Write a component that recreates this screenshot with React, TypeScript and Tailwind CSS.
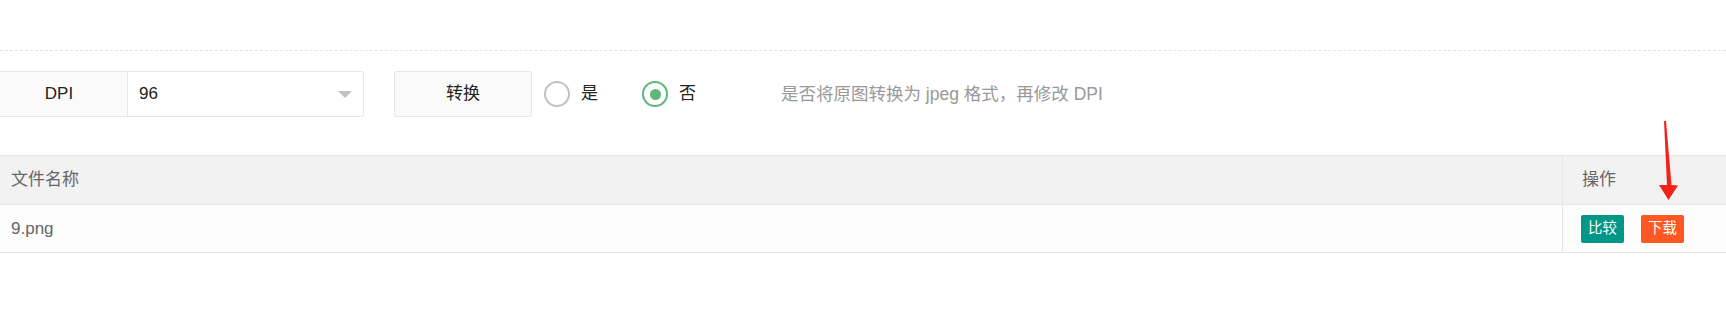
import React from "react";

function Radio({ checked, label }: { checked?: boolean; label: string }) {
  return (
    <div className="flex items-center">
      {checked ? (
        <span className="flex h-[26px] w-[26px] items-center justify-center rounded-full border-[2px] border-[#5FB878]">
          <span className="h-[11px] w-[11px] rounded-full bg-[#5FB878]" />
        </span>
      ) : (
        <span className="h-[26px] w-[26px] rounded-full border-[2px] border-[#c2c2c2]" />
      )}
      <span className="ml-[11px] text-[17px] text-[#222]">{label}</span>
    </div>
  );
}

export default function App() {
  return (
    <div className="relative h-[322px] w-[1726px] overflow-hidden bg-white font-['Liberation_Sans','Noto_Sans_CJK_SC',sans-serif]">
      <div className="h-[51px] border-b border-dashed border-[#e2e2e2]" />

      <div className="mt-[20px] flex h-[46px] items-center">
        <div className="-ml-[10px] flex h-[46px] w-[138px] items-center justify-center rounded-l-[2px] border border-[#e6e6e6] bg-[#fafafa] text-[17px] text-[#222]">
          DPI
        </div>
        <div className="-ml-px flex h-[46px] w-[237px] items-center justify-between rounded-r-[2px] border border-[#e6e6e6] bg-white pl-[11px] pr-[11px] text-[17px] text-[#222]">
          <span>96</span>
          <span className="mt-[1px] h-0 w-0 border-x-[7px] border-t-[7px] border-x-transparent border-t-[#c2c2c2]" />
        </div>
        <div className="ml-[30px] flex h-[46px] w-[138px] items-center justify-center rounded-[2px] border border-[#e6e6e6] bg-[#fafafa] text-[17px] text-[#222]">
          转换
        </div>
        <div className="ml-[12px]">
          <Radio label="是" />
        </div>
        <div className="ml-[44px]">
          <Radio checked label="否" />
        </div>
        <div className="ml-[85px] text-[17.5px] text-[#999]">
          是否将原图转换为 jpeg 格式，再修改 DPI
        </div>
      </div>

      <div className="mt-[38px] border-t border-[#e6e6e6]">
        <div className="flex h-[49px] border-b border-[#e6e6e6] bg-[#f2f2f2] text-[17px] text-[#666]">
          <div className="flex w-[1563px] items-center border-r border-[#e6e6e6] pl-[11px]">文件名称</div>
          <div className="flex flex-1 items-center pl-[19px]">操作</div>
        </div>
        <div className="flex h-[48px] border-b border-[#e6e6e6] bg-[#fdfdfd] text-[17px] text-[#666]">
          <div className="flex w-[1563px] items-center border-r border-[#e6e6e6] pl-[11px]">9.png</div>
          <div className="flex flex-1 items-center gap-[17px] pl-[18px]">
            <span className="flex h-[28px] w-[43px] items-center justify-center rounded-[2px] bg-[#009688] text-[14.4px] text-white">比较</span>
            <span className="flex h-[28px] w-[43px] items-center justify-center rounded-[2px] bg-[#FF5722] text-[14.4px] text-white">下载</span>
          </div>
        </div>
      </div>

      <svg className="absolute left-[1655px] top-[118px]" width="26" height="86" viewBox="0 0 26 86">
        <polygon points="9,3 11,3 16.5,67 23,67.5 13.5,82 4,67 12,67" fill="#f5221b" />
      </svg>
    </div>
  );
}
